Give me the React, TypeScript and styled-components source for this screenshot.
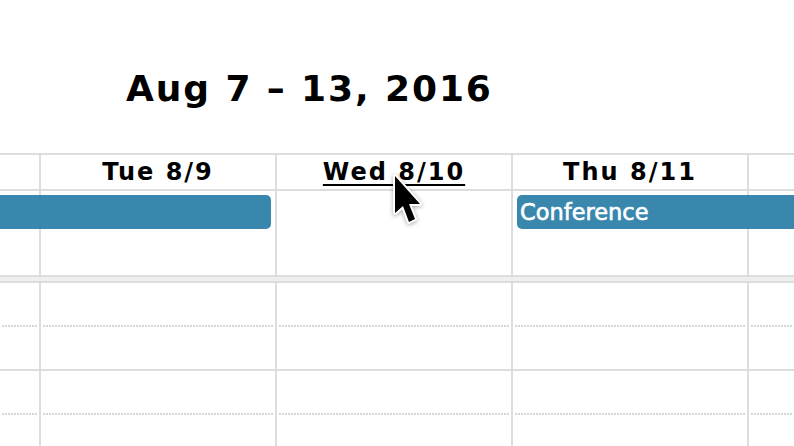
import React from 'react'
import styled, { createGlobalStyle } from 'styled-components'

const GlobalStyle = createGlobalStyle`
  html, body {
    margin: 0;
    padding: 0;
    background: #fff;
    overflow: hidden;
  }
  body {
    font-family: 'DejaVu Sans', Verdana, sans-serif;
    color: #000;
  }
`

// partial Mon | Tue | Wed | Thu | partial Fri
const COLS = '41px 236px 236px 236px 1fr'
const LINE = '#ddd'

const Page = styled.div`
  position: relative;
  width: 794px;
  height: 446px;
  overflow: hidden;
  padding-top: 71px;
  box-sizing: border-box;
`

const Title = styled.h2`
  margin: 0 0 46px;
  padding-left: 126px;
  height: 36px;
  font-size: 36px;
  line-height: 36px;
  font-weight: bold;
  letter-spacing: 1.9px;
  white-space: nowrap;
`

const HeadRow = styled.div`
  display: grid;
  grid-template-columns: ${COLS};
  border-top: 2px solid ${LINE};
  border-bottom: 2px solid ${LINE};
`

const HeadCell = styled.div<{ $last?: boolean; $link?: boolean }>`
  height: 32px;
  padding-top: 2px;
  line-height: 31px;
  text-align: center;
  font-size: 24px;
  font-weight: bold;
  letter-spacing: 2px;
  white-space: nowrap;
  border-right: ${p => (p.$last ? 'none' : `2px solid ${LINE}`)};
  span {
    text-decoration: ${p => (p.$link ? 'underline' : 'none')};
    text-decoration-thickness: 2px;
    text-underline-offset: 4px;
  }
`

const AllDayRow = styled.div`
  display: grid;
  grid-template-columns: ${COLS};
  grid-template-rows: 84px;
`

const DayCell = styled.div<{ $col: number; $last?: boolean }>`
  grid-row: 1;
  grid-column: ${p => p.$col};
  border-right: ${p => (p.$last ? 'none' : `2px solid ${LINE}`)};
`

const Event = styled.div<{ $span: string; $openLeft?: boolean; $openRight?: boolean }>`
  grid-row: 1;
  grid-column: ${p => p.$span};
  align-self: start;
  height: 34px;
  margin: 4px ${p => (p.$openRight ? '0' : '6px')} 0 ${p => (p.$openLeft ? '0' : '4px')};
  padding-left: 3px;
  background: #3a87ad;
  color: #fff;
  font-size: 22.5px;
  line-height: 34px;
  -webkit-text-stroke: 0.6px #fff;
  white-space: nowrap;
  overflow: hidden;
  border-radius: ${p => (p.$openLeft ? '0' : '5px')} ${p => (p.$openRight ? '0' : '5px')}
    ${p => (p.$openRight ? '0' : '5px')} ${p => (p.$openLeft ? '0' : '5px')};
`

const Divider = styled.div`
  height: 4px;
  background: #eee;
  border-top: 2px solid ${LINE};
  border-bottom: 2px solid ${LINE};
`

const SlotRow = styled.div<{ $solid?: boolean }>`
  display: grid;
  grid-template-columns: ${COLS};
  border-bottom: ${p => (p.$solid ? `2px solid ${LINE}` : 'none')};
`

const SlotCell = styled.div<{ $minor?: boolean; $last?: boolean }>`
  height: ${p => (p.$minor ? '44px' : '42px')};
  display: flex;
  flex-direction: column;
  justify-content: flex-end;
  border-right: ${p => (p.$last ? 'none' : `2px solid ${LINE}`)};
  box-sizing: border-box;

  &::after {
    content: '';
    display: ${p => (p.$minor ? 'block' : 'none')};
    height: 2px;
    margin: 0 2px;
    background: linear-gradient(to right, #d6d6d6 2px, transparent 2px) 0 0 / 3px 2px repeat-x;
  }
`

const Pointer = styled.svg`
  position: absolute;
  left: 392px;
  top: 173px;
  width: 34px;
  height: 56px;
  filter: drop-shadow(0 1px 2px rgba(0, 0, 0, 0.35));
  pointer-events: none;
`

const days = ['', 'Tue 8/9', 'Wed 8/10', 'Thu 8/11', '']

function SlotLine({ minor }: { minor?: boolean }) {
  return (
    <SlotRow $solid={!minor}>
      {days.map((_, i) => (
        <SlotCell key={i} $minor={minor} $last={i === days.length - 1} />
      ))}
    </SlotRow>
  )
}

export default function App() {
  return (
    <Page>
      <GlobalStyle />
      <Title>Aug 7 – 13, 2016</Title>

      <HeadRow>
        {days.map((d, i) => (
          <HeadCell key={i} $last={i === days.length - 1} $link={d === 'Wed 8/10'}>
            <span>{d}</span>
          </HeadCell>
        ))}
      </HeadRow>

      <AllDayRow>
        {days.map((_, i) => (
          <DayCell key={i} $col={i + 1} $last={i === days.length - 1} />
        ))}
        <Event $span="1 / 3" $openLeft />
        <Event $span="4 / 6" $openRight>Conference</Event>
      </AllDayRow>

      <Divider />

      <SlotLine minor />
      <SlotLine />
      <SlotLine minor />
      <SlotLine />

      <Pointer viewBox="0 0 34 56">
        <path
          d="M3 3 L3 40 L11 33 L17 49 L23 46 L17 31 L28 31 Z"
          fill="#000"
          stroke="#fff"
          strokeWidth="4"
          strokeLinejoin="round"
          paintOrder="stroke"
        />
      </Pointer>
    </Page>
  )
}
